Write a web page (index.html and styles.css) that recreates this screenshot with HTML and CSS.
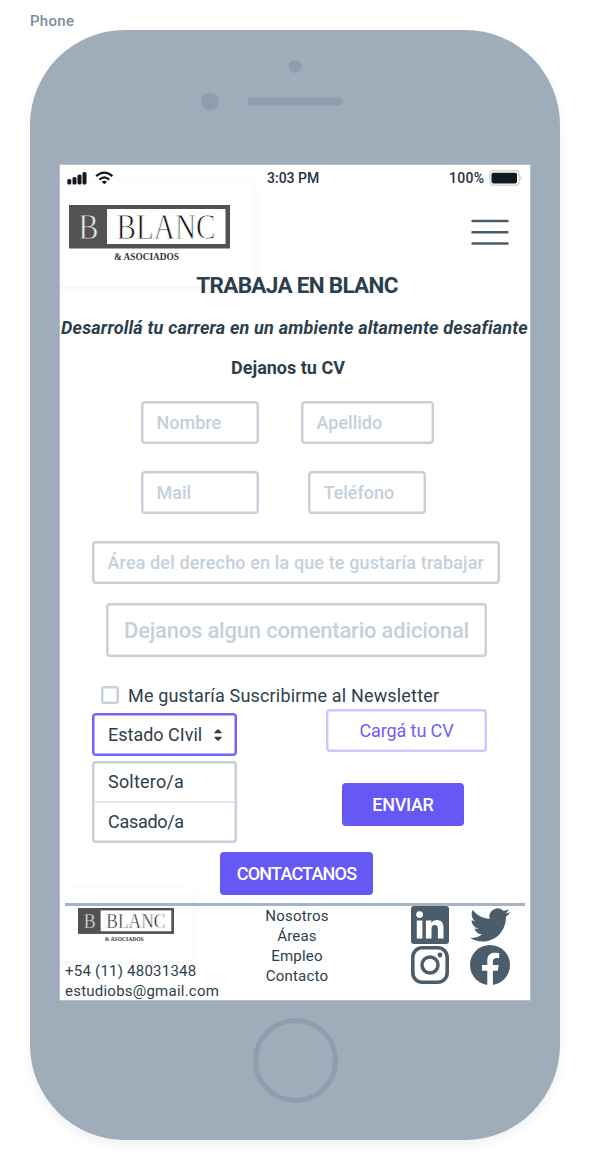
FILE: index.html
```
<!DOCTYPE html>
<html lang="es">
<head>
<meta charset="utf-8">
<title>Trabaja en Blanc</title>
<link rel="stylesheet" href="styles.css">
</head>
<body>
<div class="device-name">Phone</div>
<div class="phone">
  <div class="phone-top">
    <svg width="530" height="135" viewBox="0 0 530 135" fill="#8e9eac"><circle cx="265" cy="36.500" r="6.500"/><circle cx="180" cy="71.500" r="9"/><rect x="217.500" y="67.500" width="95" height="8" rx="4"/></svg>
  </div>
  <main class="screen">
    <div class="status">
      <svg class="signal" width="46" height="14" viewBox="0 0 46 14">
        <g fill="#101820"><rect x="0.300" y="8" width="4" height="5.500" rx="1.500"/><rect x="5.500" y="6" width="4" height="7.500" rx="1.500"/><rect x="10.500" y="3.500" width="4" height="10" rx="1.500"/><rect x="15.500" y="1" width="4" height="12.500" rx="1.500"/></g>
        <g fill="none" stroke="#101820" stroke-width="2.300"><path d="M29.200 5.200Q37.300 -1.900 45.400 5.200"/><path d="M32.400 8.600Q37.300 4.200 42.200 8.600"/></g><path d="M34.700 10.700Q37.300 8.700 39.900 10.700L37.300 13.300Z" fill="#101820"/>
      </svg>
      <span class="time">3:03 PM</span>
      <span class="charge">100%</span>
      <svg class="battery" width="34" height="16" viewBox="0 0 34 16"><rect x=".8" y=".8" width="29.400" height="14.400" rx="3.600" fill="#fff" stroke="#d2d6d9" stroke-width="1.500"/><rect x="2.500" y="2.800" width="25.500" height="10.600" rx="1.800" fill="#101820"/><path d="M31.500 5.500Q34 8 31.500 10.500Z" fill="#c3c9ce"/></svg>
    </div>
    <header class="header">
      <div class="logo-card">
        <svg class="logo" viewBox="0 0 161 58"><rect width="161" height="43.500" fill="#525252"/><rect x="38" y="4" width="118.500" height="35" fill="#fff"/>
          <g font-family="Liberation Serif, serif"><text x="9.500" y="34.300" font-size="36.500" fill="#eee" stroke="#525252" stroke-width=".8" textLength="20" lengthAdjust="spacingAndGlyphs">B</text><text x="47.500" y="34.300" font-size="36.500" fill="#111" stroke="#fff" stroke-width=".9" textLength="99" lengthAdjust="spacingAndGlyphs">BLANC</text><text x="45" y="55" font-size="9.500" font-weight="700" fill="#333" textLength="65" lengthAdjust="spacingAndGlyphs">&amp; ASOCIADOS</text></g></svg>
      </div>
      <svg class="burger" width="38" height="26" viewBox="0 0 38 26" stroke="#4b5c69" stroke-width="2.400" stroke-linecap="round"><path d="M1.500 2H36.500M1.500 13.200H36.500M1.500 24.500H36.500"/></svg>
    </header>
    <h1 class="title">TRABAJA EN BLANC</h1>
    <p class="tagline">Desarrollá tu carrera en un ambiente altamente desafiante</p>
    <h2 class="subtitle">Dejanos tu CV</h2>
    <form class="form">
      <div class="fields names"><div class="field name">Nombre</div><div class="field surname">Apellido</div></div>
      <div class="fields contact"><div class="field mail">Mail</div><div class="field phone-number">Teléfono</div></div>
      <div class="field area">Área del derecho en la que te gustaría trabajar</div>
      <div class="field comment">Dejanos algun comentario adicional</div>
      <div class="newsletter"><span class="checkbox"></span><span>Me gustaría Suscribirme al Newsletter</span></div>
      <div class="bottom">
        <div class="marital">
          <div class="select"><span>Estado CIvil</span><svg width="8" height="12" viewBox="0 0 8 12" fill="#2c3e4c"><path d="M.6 4.300Q0 3.900.5 3.300L3.300.6Q4 0 4.700.6L7.500 3.300Q8 3.900 7.400 4.300ZM.6 7.700H7.400Q8 8.100 7.500 8.700L4.700 11.400Q4 12 3.300 11.400L.5 8.700Q0 8.100.6 7.700Z"/></svg></div>
          <div class="menu"><div class="option first">Soltero/a</div><div class="option second">Casado/a</div></div>
        </div>
        <div class="actions"><div class="upload">Cargá tu CV</div><div class="send">ENVIAR</div></div>
      </div>
      <div class="contact-button">CONTACTANOS</div>
    </form>
    <footer class="footer">
      <div class="company">
        <div class="footer-card">
          <svg class="footer-logo" viewBox="0 0 161 58"><rect width="161" height="43.500" fill="#525252"/><rect x="38" y="4" width="118.500" height="35" fill="#fff"/>
          <g font-family="Liberation Serif, serif"><text x="9.500" y="34.300" font-size="36.500" fill="#eee" stroke="#525252" stroke-width=".8" textLength="20" lengthAdjust="spacingAndGlyphs">B</text><text x="47.500" y="34.300" font-size="36.500" fill="#111" stroke="#fff" stroke-width=".9" textLength="99" lengthAdjust="spacingAndGlyphs">BLANC</text><text x="45" y="55" font-size="9.500" font-weight="700" fill="#333" textLength="65" lengthAdjust="spacingAndGlyphs">&amp; ASOCIADOS</text></g></svg>
        </div>
        <div class="tel">+54 (11) 48031348</div>
        <div class="email">estudiobs@gmail.com</div>
      </div>
      <nav class="links"><span>Nosotros</span><span>Áreas</span><span>Empleo</span><span>Contacto</span></nav>
      <div class="social">
        <svg width="38" height="38" viewBox="0 0 38 38"><rect width="38" height="38" rx="3" fill="#4b5d6a"/><g fill="#fff"><circle cx="8.600" cy="8.600" r="3.400"/><path d="M5.800 14.400H11.400V32.500H5.800ZM14.900 14.400H20.300V17C21.300 15.200 23.400 14 26 14C31.400 14 32.500 17.600 32.500 22.500V32.500H26.900V23.600C26.900 21.300 26.800 18.900 24 18.900C21.100 18.900 20.500 21 20.500 23.400V32.500H14.900Z"/></g></svg>
        <svg width="40" height="34" viewBox="0 2 24 20" preserveAspectRatio="none" fill="#4b5d6a"><path d="M23.953 4.570a10 10 0 01-2.825.775 4.958 4.958 0 002.163-2.723c-.951.555-2.005.959-3.127 1.184a4.920 4.920 0 00-8.384 4.482C7.690 8.095 4.067 6.130 1.640 3.162a4.822 4.822 0 00-.666 2.475c0 1.710.870 3.213 2.188 4.096a4.904 4.904 0 01-2.228-.616v.060a4.923 4.923 0 003.946 4.827 4.996 4.996 0 01-2.212.085 4.936 4.936 0 004.604 3.417 9.867 9.867 0 01-6.102 2.105c-.390 0-.779-.023-1.170-.067a13.995 13.995 0 007.557 2.209c9.053 0 13.998-7.496 13.998-13.985 0-.210 0-.420-.015-.630A9.935 9.935 0 0024 4.590z"/></svg>
        <svg width="38" height="38" viewBox="0 0 38 38" fill="none" stroke="#4b5d6a"><rect x="1.800" y="1.800" width="34.400" height="34.400" rx="9.500" stroke-width="3.600"/><circle cx="19" cy="19" r="8" stroke-width="3.500"/><circle cx="29" cy="9" r="2.400" fill="#4b5d6a" stroke="none"/></svg>
        <svg width="40" height="40" viewBox="0 0 40 40"><circle cx="20" cy="20" r="20" fill="#4b5d6a"/><path d="M17.300 40V25.800H12V20H17.300V15.500C17.300 10.400 20.200 7.800 24.800 7.800C27 7.800 29.200 8.200 29.200 8.200V13.100H26.700C24.200 13.100 22.900 14.400 22.900 16.200V20H28.700L27.800 25.800H22.900V40Z" fill="#fff"/></svg>
      </div>
    </footer>
  </main>
  <div class="home"></div>
</div>
</body>
</html>
```
FILE: styles.css
```
* { box-sizing: border-box; }
body { margin: 0; width: 590px; height: 1170px; overflow: hidden; background: #fff; font-family: Roboto, "Open Sans", sans-serif; color: #2c3e4c; padding-left: 30px; }
svg { display: block; flex: none; }
.device-name { height: 30px; padding-top: 12px; font-size: 15px; line-height: 18px; font-weight: 500; color: #7b8d9d; letter-spacing: 0.3px; }
.phone { width: 530px; height: 1110px; border-radius: 95px; background: #9eadb9; box-shadow: 0 5px 12px rgba(0,0,0,.06); display: flex; flex-direction: column; align-items: center; }
.phone-top { height: 135px; width: 530px; }
.screen { width: 470px; height: 835px; background: #fff; box-shadow: 0 0 0 1px #b5c0ca; overflow: hidden; display: flex; flex-direction: column; }
.home { width: 85px; height: 85px; margin-top: 18px; border: 5px solid #8e9eac; border-radius: 50%; }

.status { height: 25px; display: flex; align-items: center; font-size: 14px; font-weight: 500; color: #26313b; flex: none; white-space: nowrap; position: relative; z-index: 1; }
.signal { margin-left: 7px; }
.time { margin-left: 154px; width: 60px; letter-spacing: 0; }
.charge { margin-left: 122px; width: 37px; letter-spacing: .3px; }
.battery { margin-left: 3px; }
.header { height: 106px; margin-top: -10px; flex: none; display: flex; justify-content: space-between; }
.logo-card { width: 193px; height: 106px; padding: 25px 0 0 9px; border-radius: 4px; box-shadow: 0 2px 10px rgba(0,0,0,.06); }
.logo { width: 161px; height: 58px; }
.burger { margin: 39px 21px 0 0; }
.title { margin: -16px 0 0; padding-left: 4px; height: 30px; line-height: 31px; text-align: center; font-size: 22.5px; letter-spacing: -.7px; font-weight: 700; flex: none; }
.tagline { margin: 12px 0 0 -1px; height: 30px; line-height: 31px; text-align: center; font-size: 18px; letter-spacing: .18px; font-weight: 700; font-style: italic; white-space: nowrap; }
.subtitle { margin: 10px 0 0; padding-right: 14px; height: 30px; line-height: 31px; text-align: center; font-size: 18px; font-weight: 700; }

.form { margin-top: 19px; height: 494px; flex: none; display: flex; flex-direction: column; align-items: flex-start; white-space: nowrap; }
.fields { display: flex; }
.names { margin-left: 81px; gap: 42px; }
.contact { margin: 27px 0 0 81px; gap: 49px; }
.field { height: 43px; border: 2px solid #c5d0da; box-shadow: inset 0 0 0 .5px #c5d0da; border-radius: 4px; padding-left: 13.5px; line-height: 39px; font-size: 18px; font-weight: 500; color: #c5d0da; }
.name, .mail { width: 118px; }
.surname { width: 133px; }
.phone-number { width: 118px; }
.area { margin: 27px 0 0 32px; width: 408px; letter-spacing: .13px; }
.comment { margin: 19px 0 0 46px; width: 381px; height: 54px; font-size: 22px; line-height: 52px; padding-left: 16px; letter-spacing: -.2px; }
.newsletter { margin: 24px 0 0 41px; height: 28px; display: flex; align-items: center; gap: 9px; font-size: 18px; letter-spacing: .17px; }
.checkbox { width: 18px; height: 18px; border: 2px solid #c5d0da; box-shadow: inset 0 0 0 .5px #c5d0da; border-radius: 3px; }
.bottom { display: flex; height: 134px; margin-left: 32px; }
.marital { width: 145px; margin-top: 4px; font-size: 18px; }
.select { height: 43px; border: 2px solid #7464fa; box-shadow: inset 0 0 0 .5px #7464fa; border-radius: 4px; display: flex; align-items: center; padding: 0 13px 0 14px; justify-content: space-between; }
.menu { margin-top: 5px; height: 82px; border: 2px solid #c5d0da; box-shadow: inset 0 0 0 .5px #c5d0da; border-radius: 4px; }
.option { height: 40px; padding-left: 14px; line-height: 38px; letter-spacing: .2px; }
.first { border-bottom: 2px solid #e2e8ee; }
.second { line-height: 37px; letter-spacing: -.3px; }
.actions { margin-left: 89px; width: 161px; font-size: 18px; text-align: center; }
.upload { height: 43px; border: 2px solid #cfc8fd; box-shadow: inset 0 0 0 .5px #cfc8fd; border-radius: 4px; color: #6f60f5; line-height: 39px; letter-spacing: -.1px; }
.send { margin: 31px 0 0 16px; width: 122px; height: 43px; border-radius: 4px; background: #6558f5; color: #fff; font-weight: 500; line-height: 44px; letter-spacing: -.3px; }
.contact-button { margin: 9px 0 0 160px; width: 153px; height: 43px; border-radius: 4px; background: #6558f5; color: #fff; text-align: center; font-size: 18px; font-weight: 500; line-height: 44px; letter-spacing: -.8px; }

.footer { margin: 8px 5px 0; height: 97px; border-top: 3px solid #a6b4c1; display: flex; flex: none; font-size: 15px; line-height: 20px; white-space: nowrap; }
.company { width: 180px; }
.footer-card { margin: -18px 0 0 -5px; width: 133px; height: 73px; padding: 19.5px 0 0 18px; border-radius: 4px; box-shadow: 0 2px 9px rgba(0,0,0,.05); }
.footer-logo { width: 96px; height: 34.6px; }
.tel, .email { letter-spacing: .23px; }
.links { width: 104px; display: flex; flex-direction: column; align-items: center; letter-spacing: .2px; }
.social { margin-left: 62px; display: grid; grid-template-columns: 38px 40px; grid-template-rows: 38px 40px; column-gap: 20.5px; row-gap: 1px; align-items: center; align-content: start; }
```
